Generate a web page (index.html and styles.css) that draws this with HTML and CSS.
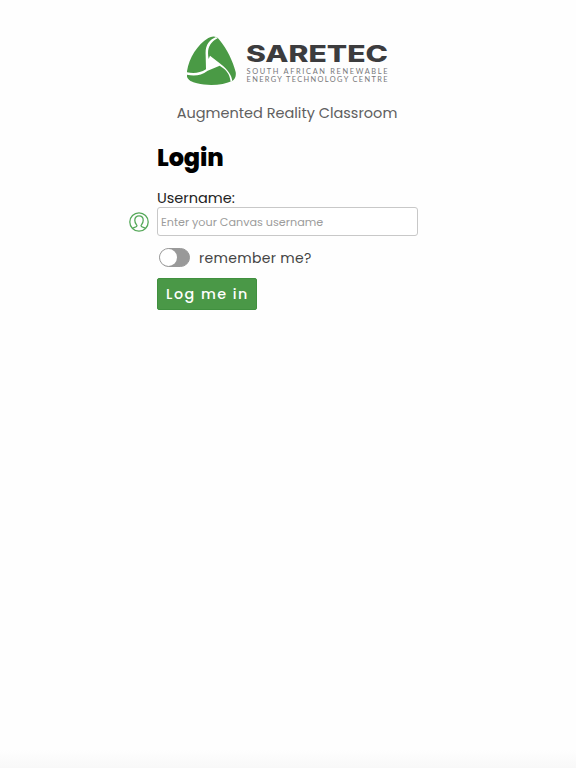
FILE: index.html
```html
<!DOCTYPE html>
<html lang="en">
<head>
    <meta charset="UTF-8">
    <meta name="viewport" content="width=device-width, initial-scale=1.0">
    <title>Saretec AR Classroom - Login</title>
    <link rel="stylesheet" href="styles.css">
</head>
<body>
    <header>
        <svg class="logo" viewBox="0 0 202 50" role="img" aria-label="Saretec">
            <g transform="translate(-7 -6) scale(0.3333)">
                <path fill="#4a9a45" d="M85 24 C97 17 110 18 118 29 C142 58 158 92 167 126 C169 139 165 147 158 152 C129 166 86 168 51 160 C32 156 19 148 20 132 C24 89 50 45 85 24 Z"/>
                <path fill="#fff" d="M108 21 C86 31 75 46 77 76 L78 118 C60 129 42 131 21 127 L20 134 C43 139 63 137 83 122 L119 107 C141 120 149 133 152 155 L157 153 C155 136 145 120 121 101 L90 77 L86 87 C80 58 88 38 113 25 Z"/>
            </g>
            <text class="logo-name" x="59" y="25.8" textLength="142" lengthAdjust="spacingAndGlyphs">SARETEC</text>
            <text class="logo-line" x="59.5" y="37.8" textLength="141">SOUTH AFRICAN RENEWABLE</text>
            <text class="logo-line" x="59.5" y="45.8" textLength="141">ENERGY TECHNOLOGY CENTRE</text>
        </svg>
        <p class="tagline">Augmented Reality Classroom</p>
    </header>
    <main>
        <h1>Login</h1>
        <form>
            <label class="field-label" for="username">Username:</label>
            <div class="field">
                <svg class="user-icon" viewBox="0 0 20 20">
                    <circle cx="10" cy="10" r="9.2"/>
                    <path d="M3.5 16.2 C5.2 15.2 8 15.3 8 13.8 C8 12.8 5.8 11.7 5.8 8.2 C5.8 5.5 7.6 3.8 10 3.8 S14.2 5.5 14.2 8.2 C14.2 11.7 12 12.8 12 13.8 C12 15.3 14.8 15.2 16.5 16.2"/>
                </svg>
                <input type="text" id="username" placeholder="Enter your Canvas username">
            </div>
            <label class="remember">
                <input type="checkbox">
                <span class="slider"></span>
                <span class="remember-text">remember me?</span>
            </label>
            <button class="button" type="submit">Log me in</button>
        </form>
    </main>
</body>
</html>
```

FILE: styles.css
```css
/* General Styles */
* {
    box-sizing: border-box;
}

body {
    font-family: Poppins, Inter, sans-serif;
    margin: 0;
    min-height: 100vh;
    background: linear-gradient(to top, #f8f8f8, #fefefe 18px);
    color: #222;
}

/* Header Styles */
header {
    display: flex;
    flex-direction: column;
    align-items: center;
    padding-top: 36px;
}

.logo {
    width: 202px;
    height: 50px;
}

.logo-name {
    font-family: Inter, sans-serif;
    font-size: 22.5px;
    font-weight: 800;
    fill: #3c3c3e;
}

.logo-line {
    font-family: Lato, sans-serif;
    font-size: 7.4px;
    fill: #77777a;
}

.tagline {
    margin: 15px 2px 0 0;
    font-size: 14.5px;
    line-height: 24px;
    color: #606060;
}

/* Login Form */
main {
    width: 261px;
    margin: 15px auto 0 157px;
}

h1 {
    margin: 0;
    font-size: 24px;
    font-weight: 800;
    line-height: 36px;
    letter-spacing: -0.1px;
    color: #000;
}

form {
    display: flex;
    flex-direction: column;
    align-items: flex-start;
}

.field-label {
    margin-top: 11px;
    font-size: 14.5px;
    line-height: 22px;
}

.field {
    display: flex;
    align-items: center;
    gap: 8px;
    width: 289px;
    margin-left: -28px;
    margin-top: -2px;
}

.user-icon {
    flex: none;
    width: 20px;
    height: 20px;
    margin-top: 1px;
    fill: none;
    stroke: #55a859;
    stroke-width: 1.3;
}

.field input {
    flex: 1;
    min-width: 0;
    height: 29px;
    padding: 1px 3px 0;
    border: 1px solid #c8c8c8;
    border-radius: 3px;
    background-color: #fff;
    font-family: inherit;
    font-size: 11.2px;
    outline: none;
}

.field input::placeholder {
    color: #9c9c9c;
}

/* Toggle Switch */
.remember {
    display: flex;
    align-items: center;
    margin: 11px 0 9px 2px;
    height: 22px;
}

.remember input {
    display: none;
}

.slider {
    width: 31px;
    height: 19px;
    margin-top: -1px;
    border: 1px solid #999;
    border-radius: 10px;
    background-color: #999;
}

.slider::before {
    content: "";
    display: block;
    width: 17px;
    height: 17px;
    border-radius: 50%;
    background-color: #fff;
}

.remember input:checked + .slider::before {
    margin-left: 12px;
}

.remember-text {
    margin: 1px 0 0 9px;
    font-size: 14px;
    letter-spacing: 0.3px;
    color: #444;
}

/* Button Styles */
.button {
    width: 100px;
    height: 32px;
    padding: 0 0 0 1px;
    border: 1px solid #40903f;
    border-radius: 2px;
    background-color: #4a9847;
    color: #fff;
    font-family: inherit;
    font-size: 14.3px;
    font-weight: 500;
    letter-spacing: 1.5px;
    white-space: nowrap;
    cursor: pointer;
}
```
